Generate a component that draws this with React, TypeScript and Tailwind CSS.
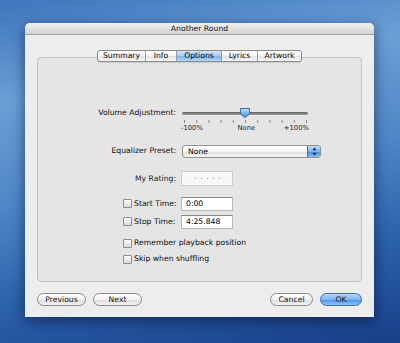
import React from 'react';
import { clsx } from 'clsx';

const tabs = [
    { label: 'Summary', w: 'w-[47px]' },
    { label: 'Info', w: 'w-[31px]' },
    { label: 'Options', w: 'w-[45px]', active: true },
    { label: 'Lyrics', w: 'w-[36px]' },
    { label: 'Artwork', w: 'w-[44px]' },
];

const Checkbox: React.FC = () => (
    <span className="block w-[9px] h-[9px] shrink-0 rounded-[1px] border border-[#8e8e8e] bg-[linear-gradient(180deg,#ffffff,#d9d9d9)]" />
);

const TextField: React.FC<{ value: string }> = ({ value }) => (
    <div className="w-[52px] h-[14px] bg-white border border-[#b9b9b9] border-t-[#8a8a8a] pl-[4px] leading-[12px] text-[#000]">
        {value}
    </div>
);

const Pill: React.FC<{ label: string; className: string; primary?: boolean }> = ({ label, className, primary }) => (
    <div
        className={clsx(
            'h-[13px] rounded-full border flex items-center justify-center leading-none',
            primary
                ? 'border-[#3a6db5] bg-[linear-gradient(180deg,#b8d8f8_0%,#7cb4f0_50%,#4f95e6_55%,#8cc4f6_100%)] text-[#0d1a2c]'
                : 'border-[#8a8a8a] bg-[linear-gradient(180deg,#ffffff_0%,#f1f1f1_50%,#dedede_55%,#f4f4f4_100%)] text-[#111]',
            className
        )}
    >
        {label}
    </div>
);

const Slider: React.FC = () => {
    const ticks = Array.from({ length: 11 }, (_, i) => 3 + i * 12.2);
    return (
        <div className="w-[128px] flex flex-col">
            <svg width="128" height="18" viewBox="0 0 128 18">
                <defs>
                    <linearGradient id="track" x1="0" y1="0" x2="0" y2="1">
                        <stop offset="0" stopColor="#5e5e5e" />
                        <stop offset="1" stopColor="#a4a4a4" />
                    </linearGradient>
                    <linearGradient id="thumb" x1="0" y1="0" x2="0" y2="1">
                        <stop offset="0" stopColor="#cfe6fb" />
                        <stop offset="0.5" stopColor="#7fb6ee" />
                        <stop offset="1" stopColor="#3f86dc" />
                    </linearGradient>
                </defs>
                <rect x="1" y="6" width="126" height="3" rx="1.5" fill="url(#track)" />
                {ticks.map((x) => (
                    <rect key={x} x={x} y="14" width="1" height="3" fill="#8a8a8a" />
                ))}
                <path
                    d="M59.5 2.5 H68.5 V8 L64 11.5 L59.5 8 Z"
                    fill="url(#thumb)"
                    stroke="#3a67a8"
                    strokeWidth="1"
                    strokeLinejoin="round"
                />
            </svg>
            <div className="flex justify-between h-[8px] leading-[8px] text-[6.8px] text-[#222]">
                <span>-100%</span>
                <span className="pl-[6px]">None</span>
                <span>+100%</span>
            </div>
        </div>
    );
};

const Popup: React.FC = () => (
    <div className="w-[139px] h-[13px] flex rounded-[3px] border border-[#909090] overflow-hidden bg-[linear-gradient(180deg,#ffffff_0%,#f3f3f3_50%,#e2e2e2_55%,#f2f2f2_100%)]">
        <div className="flex-1 pl-[5px] leading-[11px] text-[#000]">None</div>
        <div className="w-[13px] border-l border-[#3f70b5] bg-[linear-gradient(180deg,#bcdaf8_0%,#7fb5ef_50%,#4a90e3_55%,#88c0f4_100%)] flex items-center justify-center">
            <svg width="5" height="9" viewBox="0 0 5 9">
                <path d="M2.5 0.5 L4.5 3.2 H0.5 Z" fill="#0c2448" />
                <path d="M2.5 8.5 L4.5 5.8 H0.5 Z" fill="#0c2448" />
            </svg>
        </div>
    </div>
);

const Rating: React.FC = () => (
    <div className="w-[52px] h-[15px] border border-[#cdcdcd] bg-[#f7f7f7] flex items-center justify-center gap-[5px]">
        {[0, 1, 2, 3, 4].map((i) => (
            <span key={i} className="block w-[1px] h-[1px] bg-[#9c9c9c]" />
        ))}
    </div>
);

export default function App() {
    return (
        <div className="w-[400px] h-[343px] overflow-hidden pt-[23px] pl-[25px] bg-[linear-gradient(170deg,#3f76bd_0%,#6a9fd6_25%,#4f86c7_50%,#2b60aa_75%,#173f88_100%)] font-['DejaVu_Sans',sans-serif] text-[7.7px]">
            <div className="w-[349px] h-[294px] flex flex-col rounded-t-[5px] bg-[#ededed] shadow-[0_4px_14px_rgba(0,10,40,0.55)]">
                <div className="h-[12px] shrink-0 rounded-t-[5px] border-b border-[#a2a2a2] bg-[linear-gradient(180deg,#f0f0f0,#d4d4d4)] flex items-center justify-center text-[#111]">
                    Another Round
                </div>

                <div className="flex flex-col px-[12px] pt-[15px]">
                    <div className="flex justify-center -mb-[5px] relative z-10">
                        <div className="flex h-[12px] rounded-[3px] border border-[#8c8c8c] overflow-hidden bg-[linear-gradient(180deg,#ffffff_0%,#f4f4f4_50%,#e4e4e4_55%,#f6f6f6_100%)] shadow-[0_1px_1px_rgba(0,0,0,0.12)]">
                            {tabs.map((t, i) => (
                                <div
                                    key={t.label}
                                    className={clsx(
                                        'flex items-center justify-center leading-none text-[#0a0a0a]',
                                        t.w,
                                        i > 0 && 'border-l border-[#9a9a9a]',
                                        t.active && 'bg-[linear-gradient(180deg,#d2e7fb_0%,#a2cbf3_50%,#7db5ee_55%,#b3d8f8_100%)]'
                                    )}
                                >
                                    {t.label}
                                </div>
                            ))}
                        </div>
                    </div>

                    <div className="h-[225px] rounded-[4px] border border-[#c3c3c3] bg-[#e5e5e5] flex flex-col text-[#0d0d0d]">
                        <div className="flex mt-[48px]">
                            <div className="w-[143px] pr-[5px] h-[14px] leading-[14px] text-right">Volume Adjustment:</div>
                            <Slider />
                        </div>

                        <div className="flex items-center mt-[12px] h-[14px]">
                            <div className="w-[144px] pr-[6px] text-right">Equalizer Preset:</div>
                            <Popup />
                        </div>

                        <div className="flex items-center mt-[13px] h-[15px]">
                            <div className="w-[143px] pr-[5px] text-right text-[#1a1a1a]">My Rating:</div>
                            <Rating />
                        </div>

                        <div className="flex items-center mt-[11px] h-[14px]">
                            <div className="w-[143px] pl-[85px] flex items-center gap-[2px]">
                                <Checkbox />
                                <span>Start Time:</span>
                            </div>
                            <TextField value="0:00" />
                        </div>

                        <div className="flex items-center mt-[4px] h-[14px]">
                            <div className="w-[143px] pl-[85px] flex items-center gap-[2px]">
                                <Checkbox />
                                <span>Stop Time:</span>
                            </div>
                            <TextField value="4:25.848" />
                        </div>

                        <div className="flex items-center mt-[8px] h-[12px] pl-[85px] gap-[2px]">
                            <Checkbox />
                            <span>Remember playback position</span>
                        </div>

                        <div className="flex items-center mt-[4px] h-[12px] pl-[85px] gap-[2px]">
                            <Checkbox />
                            <span>Skip when shuffling</span>
                        </div>
                    </div>

                    <div className="flex justify-between mt-[11px]">
                        <div className="flex gap-[7px]">
                            <Pill label="Previous" className="w-[49px]" />
                            <Pill label="Next" className="w-[49px]" />
                        </div>
                        <div className="flex gap-[7px]">
                            <Pill label="Cancel" className="w-[43px]" />
                            <Pill label="OK" className="w-[42px]" primary />
                        </div>
                    </div>
                </div>
            </div>
        </div>
    );
}
